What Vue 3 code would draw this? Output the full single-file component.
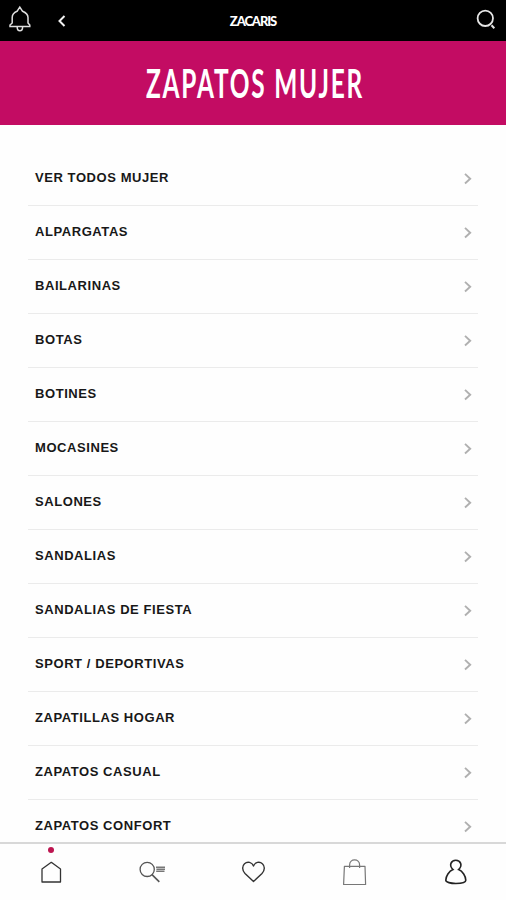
<template>
  <div class="app">
    <header class="topbar">
      <button class="icon-btn bell" aria-label="Notificaciones">
        <svg width="24" height="30" viewBox="0 0 24 30" fill="none" stroke="#dedede" stroke-width="1.5">
          <path d="M2 23.5V22L4.2 20V14.5C4.2 11 7 9.2 9 8.3L11.8 4L14.6 8.3C16.7 9.2 20 11 20 14.5V20L21.8 22V23.5Z" />
          <path d="M9.2 24C9.2 29 14.6 29 14.6 24" />
        </svg>
      </button>
      <button class="icon-btn back" aria-label="Volver">
        <svg width="10" height="14" viewBox="0 0 10 14" fill="none" stroke="#f2f2f2" stroke-width="2">
          <path d="M7.5 2L2.5 7L7.5 12" />
        </svg>
      </button>
      <span class="brand">ZACARIS</span>
      <button class="icon-btn search" aria-label="Buscar">
        <svg width="22" height="22" viewBox="0 0 22 22" fill="none" stroke="#e6e6e6" stroke-width="1.8">
          <circle cx="10.3" cy="9.3" r="7.7" />
          <path d="M16.5 16.3L19.3 19.2" stroke-width="2" />
        </svg>
      </button>
    </header>

    <div class="banner">
      <svg class="banner-title" width="260" height="60" viewBox="0 0 260 60">
        <text x="22" y="45" textLength="218" lengthAdjust="spacingAndGlyphs">ZAPATOS MUJER</text>
      </svg>
    </div>

    <ul class="menu">
      <li v-for="item in items" :key="item" class="menu-item">
        <span>{{ item }}</span>
        <svg width="9" height="13" viewBox="0 0 9 13" fill="none" stroke="#b0b0b0" stroke-width="1.9">
          <path d="M2 1.9L7.2 6.7L2 11.5" />
        </svg>
      </li>
    </ul>

    <nav class="tabbar">
      <button class="tab active" aria-label="Inicio">
        <svg width="30" height="30" viewBox="0 0 30 30" fill="none" stroke="#333" stroke-width="1.3" stroke-linejoin="round">
          <path d="M6 25V12L15.3 5.3L24.5 12V25Z" />
        </svg>
      </button>
      <button class="tab" aria-label="Buscar productos">
        <svg width="30" height="30" viewBox="0 0 30 30" fill="none" stroke="#555" stroke-width="1.3">
          <circle cx="10.2" cy="12.4" r="7.1" />
          <path d="M15 17.6L22.3 24.9" stroke-width="1.6" />
          <path d="M19 10.2H28M19.4 12.2H28M19.2 14.2H27.5" stroke="#777" stroke-width="1.5" />
        </svg>
      </button>
      <button class="tab" aria-label="Favoritos">
        <svg width="30" height="30" viewBox="0 0 30 30" fill="none" stroke="#333" stroke-width="1.4" stroke-linejoin="round">
          <path d="M15.5 24.5L7 16.5C4 13.5 4 9 6.5 6.7C9.5 4 14 5.2 15.5 9C17 5.2 21.5 4 24.4 6.7C27 9 27 13.5 24 16.5Z" />
        </svg>
      </button>
      <button class="tab" aria-label="Bolsa">
        <svg width="30" height="30" viewBox="0 0 30 30" fill="none" stroke="#777" stroke-width="1.2" stroke-linejoin="round">
          <path d="M5.4 9.3H26L26.6 27.5H4.6Z" />
          <path d="M10.6 11V8C10.6 1.2 20.6 1.2 20.6 8V11" />
        </svg>
      </button>
      <button class="tab" aria-label="Cuenta">
        <svg width="30" height="30" viewBox="0 0 30 30" fill="none" stroke="#222" stroke-width="1.6">
          <path d="M13 12.6C8.6 8.4 11 3.3 15.8 3.3C20.6 3.3 23 8.4 18.6 12.6C22.6 14 25.8 19.5 25.8 23.2C25.8 27.5 5.8 27.5 5.8 23.2C5.8 19.5 9 14 13 12.6Z" />
        </svg>
      </button>
    </nav>
  </div>
</template>

<script setup>
const items = [
  'VER TODOS MUJER',
  'ALPARGATAS',
  'BAILARINAS',
  'BOTAS',
  'BOTINES',
  'MOCASINES',
  'SALONES',
  'SANDALIAS',
  'SANDALIAS DE FIESTA',
  'SPORT / DEPORTIVAS',
  'ZAPATILLAS HOGAR',
  'ZAPATOS CASUAL',
  'ZAPATOS CONFORT'
]
</script>

<style>
body {
  margin: 0;
  background: #fff;
}
</style>

<style scoped>
.app {
  display: flex;
  flex-direction: column;
  height: 900px;
  overflow: hidden;
  background: #fefefe;
  font-family: "Liberation Sans", Arial, sans-serif;
}

button {
  padding: 0;
  border: none;
  background: none;
  cursor: pointer;
}

svg {
  display: block;
}

.topbar {
  display: grid;
  grid-template-columns: 48px 120px 1fr 120px 48px;
  align-items: start;
  flex: none;
  height: 41px;
  background: #000;
}

.bell {
  margin: 3px 0 0 8px;
  justify-self: start;
}

.back {
  margin: 14px 0 0 9px;
  justify-self: start;
}

.brand {
  justify-self: center;
  margin-top: 13px;
  color: #fff;
  font: 900 13px/17px Lato, sans-serif;
  letter-spacing: -1.1px;
}

.search {
  grid-column: 5;
  margin: 9px 0 0 17px;
  justify-self: start;
}

.banner {
  display: flex;
  justify-content: center;
  flex: none;
  height: 84px;
  background: #c30c63;
}

.banner-title {
  margin-top: 12px;
  margin-left: 2px;
}

.banner-title text {
  fill: #fff;
  font: 700 41px Lato, sans-serif;
  letter-spacing: 3px;
}

.menu {
  flex: 1;
  min-height: 0;
  margin: 0;
  padding: 27px 28px 0;
  overflow: hidden;
  list-style: none;
}

.menu-item {
  display: flex;
  align-items: center;
  justify-content: space-between;
  box-sizing: border-box;
  height: 54px;
  padding: 0 6px 0 7px;
  border-bottom: 1px solid #ebebeb;
  color: #181818;
  font-size: 13px;
  font-weight: 700;
  letter-spacing: 0.57px;
}

.menu-item span {
  margin-top: -3px;
}

.tabbar {
  display: grid;
  grid-template-columns: repeat(5, 1fr);
  flex: none;
  box-sizing: border-box;
  height: 58px;
  border-top: 2px solid #d8d8d8;
  background: #fefefe;
}

.tab {
  position: relative;
  display: flex;
  justify-content: center;
  padding-top: 13px;
}

.tab.active::before {
  content: "";
  position: absolute;
  top: 3px;
  left: 48px;
  width: 6px;
  height: 6px;
  border-radius: 50%;
  background: #bd1550;
}
</style>
